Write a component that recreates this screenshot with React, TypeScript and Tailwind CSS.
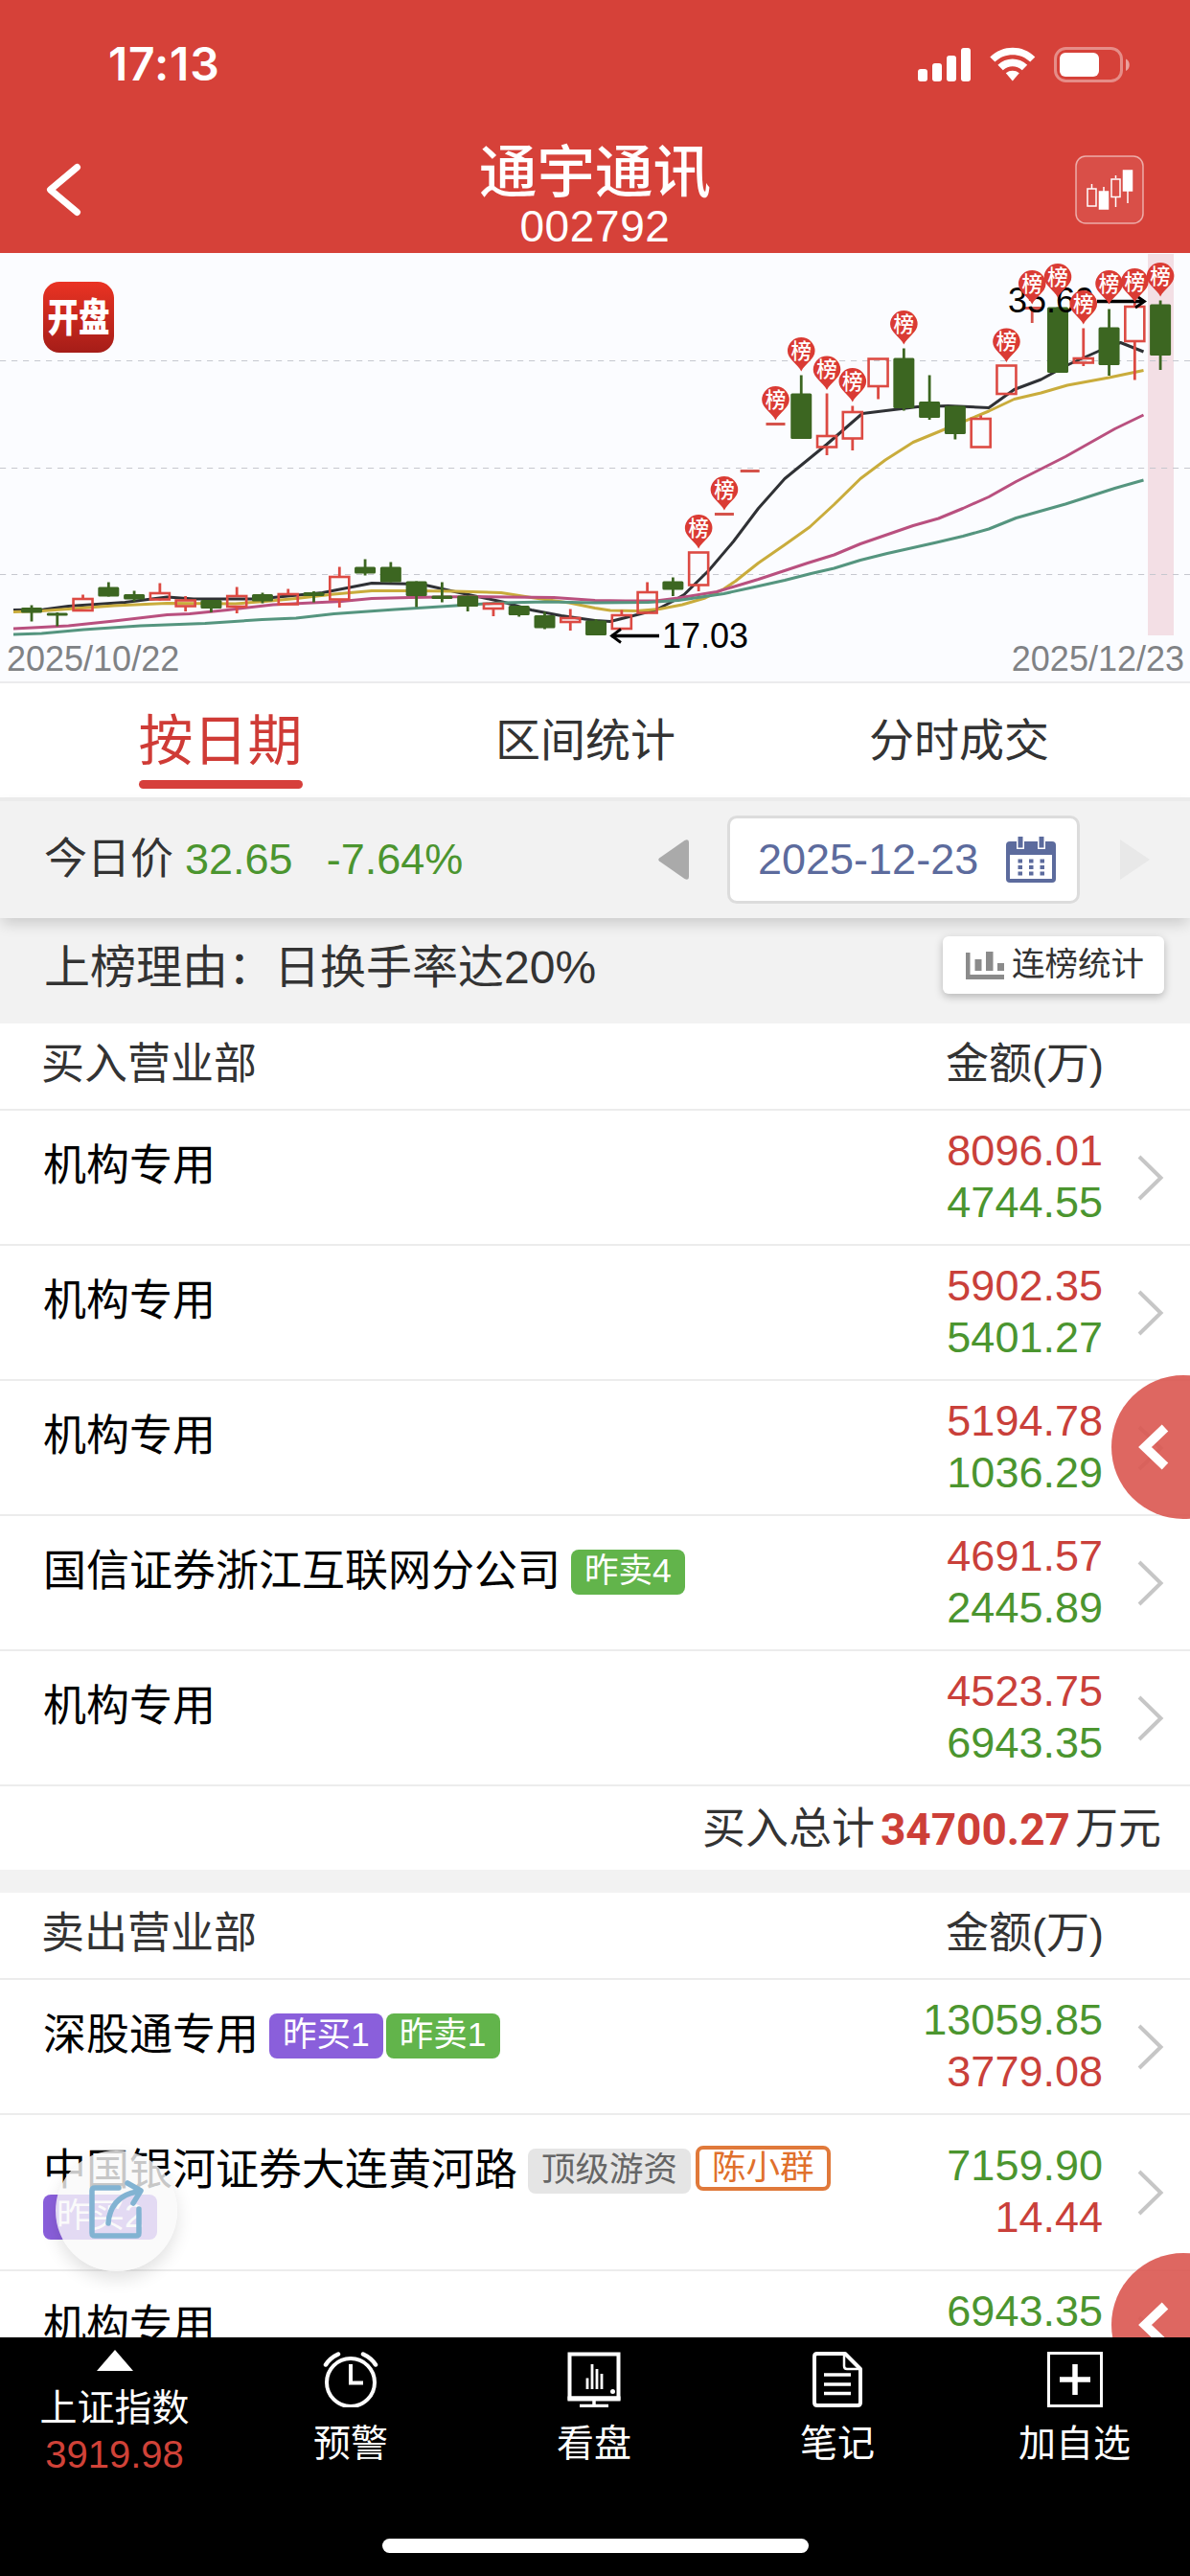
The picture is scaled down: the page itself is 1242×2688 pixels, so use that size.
import clsx from 'clsx'

type Candle = {
  up: boolean
  top: number
  bottom: number
  high: number
  low: number
  pin?: number
}

const STEP = 26.775
const FIRST_X = 33

const c = (up: boolean, top: number, bottom: number, high = top, low = bottom, pin?: number): Candle => ({ up, top, bottom, high, low, pin })

const candles: Candle[] = [
  c(false, 370, 375.5, 367.5, 384.5),
  c(false, 375.5, 378.5, 375, 389.5),
  c(true, 360.5, 372.5, 356.5),
  c(false, 348.5, 358.5, 343.5),
  c(false, 356, 361.5, 352.5, 363.5),
  c(true, 354.5, 361, 344.5, 362.5),
  c(true, 362, 368, 358, 374),
  c(false, 362, 371, 362, 375),
  c(true, 357.5, 368.5, 348.5, 376),
  c(false, 356, 363.5, 354.5, 365.5),
  c(true, 355.5, 366, 350.5),
  c(false, 354, 358, 353, 364.5),
  c(true, 337.5, 361, 327.5, 370),
  c(false, 327.5, 334.5, 319.5, 336.5),
  c(false, 327.5, 343.5, 322.5),
  c(false, 342.5, 358, 342.5, 369.5),
  c(false, 357.5, 361, 343.5, 364.5),
  c(false, 357.5, 369, 357.5, 374),
  c(true, 365.5, 370.5, 365.5, 379),
  c(false, 368, 378, 368, 379.5),
  c(false, 378, 391.5, 374.5, 392.5),
  c(true, 380.5, 384.5, 371.5, 394),
  c(false, 383.5, 399, 382),
  c(true, 377.5, 391.5, 372.5),
  c(true, 353.5, 375, 343.5),
  c(false, 342.5, 351.5, 338.5, 358),
  c(true, 312, 346, 312, 353, 273),
  c(true, 272.5, 272.5, 272.5, 272.5, 233),
  c(true, 227.5, 227.5),
  c(true, 178.5, 178.5, 178.5, 178.5, 139),
  c(false, 146.5, 194, 127.5, 194, 88),
  c(true, 190.5, 202, 146.5, 211, 107.5),
  c(true, 165.5, 193, 159.5, 206, 120),
  c(true, 110, 138.5, 110, 152.5),
  c(false, 109.5, 162, 99.5, 164.5, 60),
  c(false, 155, 172, 127.5, 174),
  c(false, 159.5, 189, 159.5, 194.5),
  c(true, 172.5, 202, 169.5),
  c(true, 117, 146.5, 117, 146.5, 78.5),
  c(true, 57.5, 57.5, 57.5, 73, 18),
  c(false, 56.5, 125, 56.5, 125, 11),
  c(true, 109.5, 114, 78.5, 118, 39),
  c(false, 77.5, 117, 58.5, 128, 18),
  c(true, 55.5, 91.5, 50, 132.5, 16),
  c(false, 53.5, 107, 49.5, 122, 10),
]

const averages = [
  {
    color: '#2f3135',
    points: '14,372.5 45.5,372 71.5,368.5 130.5,364.5 174.5,359 202,361 269,361 336.5,354.5 388,344.5 439.5,345.5 475,353.5 526.5,364.5 554.5,372.5 586,378.5 621,383.5 637,384.5 684.5,372.5 702,363.5 714,356.5 740,331 765.5,301 791.5,266.5 819,235.5 862.5,200 900,167.5 957.5,160.5 989.5,159.5 1032,161.5 1058.5,142.5 1086.5,132 1116,116 1147.5,102 1169.5,93.5 1193.5,103',
  },
  {
    color: '#c9ac3c',
    points: '14,374.5 43.5,373.5 119,368 174.5,365.5 245.5,366 277,363.5 309,360.5 348.5,356 388,352.5 431.5,352.5 475,353 523,354.5 554.5,359.5 594,365 621,370.5 637,373 664.5,373.5 688.5,371.5 712,367 736,360 755.5,350.5 767.5,342.5 791.5,323.5 819,304.5 845,286 870.5,262.5 898,235.5 924,216 953,197.5 989.5,182.5 1032,165 1058.5,152.5 1086.5,146 1114,138 1157.5,130 1193.5,122.5',
  },
  {
    color: '#b9507f',
    points: '14,392 43.5,390.5 71.5,389 119,384 174.5,377.5 198,376.5 237.5,372.5 285,367 356.5,363.5 388,360.5 427.5,359.5 491,358.5 578,359.5 621,362.5 652.5,363 684.5,363 708,360 748,353.5 791.5,340.5 843,323.5 870.5,315 898,303.5 953,284.5 979.5,277 1005,266.5 1032,254.5 1060.5,238.5 1112,212.5 1163.5,183.5 1193.5,169',
  },
  {
    color: '#55957f',
    points: '14,398 43.5,397 87,393 146.5,389 214,386.5 273.5,382.5 309,381 348.5,376.5 412,372 467.5,368.5 523,365 570.5,364 621,365 676.5,364.5 708,362.5 755.5,355.5 787.5,348.5 819,341.5 846.5,334.5 870.5,329 898,320.5 926,313.5 977.5,302 1005,295.5 1032,288 1060.5,276.5 1112,262 1163.5,245.5 1193.5,237',
  },
]

type Tag = { text: string; kind: 'buy' | 'sell' | 'type' | 'player' }
type Row = { name: string; amounts: [string, string]; tags?: Tag[] }

const buyRows: Row[] = [
  { name: '机构专用', amounts: ['8096.01', '4744.55'] },
  { name: '机构专用', amounts: ['5902.35', '5401.27'] },
  { name: '机构专用', amounts: ['5194.78', '1036.29'] },
  { name: '国信证券浙江互联网分公司', amounts: ['4691.57', '2445.89'], tags: [{ text: '昨卖4', kind: 'sell' }] },
  { name: '机构专用', amounts: ['4523.75', '6943.35'] },
]

const sellRows: Row[] = [
  {
    name: '深股通专用',
    amounts: ['13059.85', '3779.08'],
    tags: [
      { text: '昨买1', kind: 'buy' },
      { text: '昨卖1', kind: 'sell' },
    ],
  },
  {
    name: '中国银河证券大连黄河路',
    amounts: ['7159.90', '14.44'],
    tags: [
      { text: '顶级游资', kind: 'type' },
      { text: '陈小群', kind: 'player' },
      { text: '昨买2', kind: 'buy' },
    ],
  },
  { name: '机构专用', amounts: ['6943.35', '4523.75'] },
]

function StatusBar() {
  return (
    <div className="flex h-[136px] items-center justify-between pl-[113px] pr-[62px]">
      <span className="pb-0.5 font-['Inter'] text-[48px] font-semibold leading-none tracking-[0.8px]">17:13</span>
      <svg width="222" height="38" viewBox="0 0 222 38" fill="#fff">
        <rect x="0" y="23" width="10" height="13" rx="3" />
        <rect x="15" y="17" width="10" height="19" rx="3" />
        <rect x="30" y="9" width="10" height="27" rx="3" />
        <rect x="45" y="1" width="10" height="35" rx="3" />
        <path d="M75.3 10.4C88.5-2.6 109.5-2.6 122.3 10.4L117.2 15.6C107.2 5.8 90.5 5.8 80.4 15.6Z" />
        <path d="M83.4 18.8C92.2 10.4 105.2 10.4 114.2 18.8L108.8 24.2C103 18.9 94.6 18.9 88.8 24.2Z" />
        <path d="M91.8 27.2C96 23.9 101.6 23.9 105.8 27.2L98.8 35.6Z" />
        <rect x="143.5" y="1.5" width="69" height="34" rx="11" fill="none" stroke="#fff" strokeOpacity=".4" strokeWidth="3" />
        <rect x="148" y="6" width="41" height="25" rx="6" />
        <path d="M217 12.5C222 14.5 222 23 217 25Z" fillOpacity=".5" />
      </svg>
    </div>
  )
}

function Header() {
  return (
    <header className="h-[264px] shrink-0 bg-[#d64139] text-white">
      <StatusBar />
      <div className="flex h-[128px]">
        <button className="flex w-[120px] items-start pl-[46px] pt-[33px]">
          <svg width="40" height="58" viewBox="0 0 40 58" fill="none" stroke="#fff" strokeWidth="7" strokeLinecap="round" strokeLinejoin="round">
            <path d="M34.500 5.500L6.500 29L34.500 52.500" />
          </svg>
        </button>
        <div className="flex-1 pt-3 text-center">
          <h1 className="text-[60.5px] font-medium leading-[64px]">通宇通讯</h1>
          <p className="text-[46px] leading-[48px] tracking-[0.6px]">002792</p>
        </div>
        <div className="flex w-[120px] items-start pt-[26px]">
          <svg width="72" height="72" viewBox="0 0 72 72" fill="none" stroke="#fff" strokeWidth="1.5">
            <rect x="1" y="1" width="70" height="70" rx="10" fill="#fff" fillOpacity=".08" strokeOpacity=".55" />
            <path d="M17.5 30V35M30 33V38M42.5 21V24M42.5 44V54M55 37V50" />
            <rect x="13" y="35" width="9" height="18" />
            <rect x="25.5" y="38" width="9" height="18" fill="#fff" />
            <rect x="38" y="25" width="9" height="18.5" />
            <rect x="50.5" y="16" width="9" height="21" fill="#fff" />
          </svg>
        </div>
      </div>
    </header>
  )
}

function CandleShape({ candle, x }: { candle: Candle; x: number }) {
  const { up, top, bottom, high, low } = candle
  if (top === bottom) {
    return (
      <g stroke="#d5534b">
        <path d={`M${x - 10} ${top}H${x + 10}`} strokeWidth="3" />
        {low > bottom && <path d={`M${x} ${top}V${low}`} strokeWidth="2.8" />}
      </g>
    )
  }
  if (!up) {
    return (
      <g>
        <path d={`M${x} ${high}V${low}`} stroke="#3c6621" strokeWidth="2.8" />
        <rect x={x - 11} y={top} width="22" height={bottom - top} rx="1.5" fill="#3c6621" />
      </g>
    )
  }
  return (
    <g stroke="#dc4a43" fill="none">
      <path d={`M${x} ${high}V${top}M${x} ${bottom}V${low}`} strokeWidth="2.8" />
      <rect x={x - 10} y={top + 0.5} width="20" height={bottom - top} strokeWidth="2.6" />
    </g>
  )
}

function Chart() {
  return (
    <svg className="block shrink-0 bg-[#fbfcff]" width="1242" height="447" viewBox="0 0 1242 447">
      <defs>
        <linearGradient id="logo" x1="0" y1="0" x2="0" y2="1">
          <stop offset="0" stopColor="#ea3323" />
          <stop offset="1" stopColor="#a51d18" />
        </linearGradient>
      </defs>
      <rect x="1198" y="1" width="27" height="398" fill="#f3dfe5" />
      <path d="M0 112.5H1242M0 224.5H1242M0 335.5H1242" stroke="#c6c8cf" strokeWidth="1" strokeDasharray="6.2 5.8" />

      {/* 开盘 logo */}
      <rect x="45" y="30" width="74" height="74" rx="17" fill="url(#logo)" />
      <text x="49.5" y="82" fontSize="41" fontWeight="900" fill="#fff" textLength="65" lengthAdjust="spacingAndGlyphs">开盘</text>

      {averages.map((line) => (
        <polyline key={line.color} points={line.points} fill="none" stroke={line.color} strokeWidth="3" strokeLinejoin="round" />
      ))}
      {candles.map((candle, i) => (
        <CandleShape key={i} candle={candle} x={FIRST_X + i * STEP} />
      ))}

      {/* high / low labels */}
      <g stroke="#000" fill="none">
        <path d="M638 399.5H688" strokeWidth="3.5" />
        <path d="M648 392.5L638.5 399.5L648 406.5" strokeWidth="2.8" />
        <path d="M1145 50.5H1194" strokeWidth="3.5" />
        <path d="M1185 44L1194.5 50.5L1185 57" strokeWidth="2.8" />
      </g>
      <text x="691" y="412" fontSize="36" fill="#000">17.03</text>
      <text x="1052" y="61.5" fontSize="36" fill="#000">35.69</text>

      {candles.map((candle, i) => {
        if (candle.pin === undefined) return null
        return (
          <g key={i} transform={`translate(${FIRST_X + i * STEP} ${candle.pin})`}>
            <path d="M0 35.5C-4 27.5-14.3 22.5-14.3 14.3A14.3 14.3 0 0 1 14.3 14.3C14.3 22.5 4 27.5 0 35.5Z" fill="#da3b34" />
            <text y="21.5" fontSize="21.5" fontWeight="500" fill="#fff" textAnchor="middle">榜</text>
          </g>
        )
      })}

      <text x="7" y="435.5" fontSize="36" fill="#808285">2025/10/22</text>
      <text x="1236" y="435.5" fontSize="36" fill="#808285" textAnchor="end">2025/12/23</text>
    </svg>
  )
}

function Tabs() {
  return (
    <nav className="flex h-[121px] shrink-0 border-t-2 border-[#ebebed] bg-white pl-[37px] text-[47px] text-[#333]">
      <div className="flex w-[386px] flex-col items-center pt-[30px]">
        <span className="text-[57px] leading-[60px] text-[#cf3b36]">按日期</span>
        <span className="mt-[11px] h-[9px] w-[171px] rounded-full bg-[#d63f3b]" />
      </div>
      <div className="w-[376px] pt-[30px] text-center leading-[60px]">区间统计</div>
      <div className="w-[404px] pt-[30px] text-center leading-[60px]">分时成交</div>
    </nav>
  )
}

function DateBar() {
  return (
    <div className="relative flex h-[126px] shrink-0 items-center border-t-4 border-[#ebebeb] bg-[#f2f2f2] pl-[46px] pr-[41px] text-[45px] shadow-[0_8px_14px_-2px_rgba(0,0,0,0.16)]">
      <span className="text-[#333]">今日价</span>
      <span className="ml-3 text-[#4b952f]">32.65</span>
      <span className="ml-[35px] text-[#4b952f]">-7.64%</span>
      <div className="ml-auto flex items-center">
        <svg width="32" height="42" viewBox="0 0 32 42" fill="#aaa">
          <path d="M1 19.5L27.5 1Q32-1 32 3V39Q32 43 27.5 41L1 22.5Q-0.5 21 1 19.5Z" />
        </svg>
        <div className="ml-[40px] flex h-[92px] w-[368px] items-center rounded-[10px] border-[3px] border-[#dcdcdc] bg-white pl-[29px] text-[#5c6b9d]">
          <span>2025-12-23</span>
          <svg className="ml-[29px]" width="52" height="48" viewBox="0 0 52 48" fill="#5c6b9d">
            <rect x="0" y="5" width="52" height="43" rx="4" />
            <rect x="4" y="19" width="44" height="25" fill="#fff" />
            <path d="M11 0H19V13H11ZM33 0H41V13H33Z" fill="#fff" />
            <path d="M12.5 0H17.5V11.5H12.5ZM34.5 0H39.5V11.5H34.5Z" />
            <path d="M12.5 23.5h4.5v4h-4.5zM24 23.5h4.5v4h-4.5zM35.5 23.5h4.5v4h-4.5zM12.5 30h4.5v4h-4.5zM24 30h4.5v4h-4.5zM35.5 30h4.5v4h-4.5zM12.5 36.5h4.5v4h-4.5zM24 36.5h4.5v4h-4.5zM35.5 36.5h4.5v4h-4.5z" />
          </svg>
        </div>
        <svg className="ml-[42px]" width="32" height="42" viewBox="0 0 32 42" fill="#e8e8e8">
          <path d="M31 21L0 0V42Z" />
        </svg>
      </div>
    </div>
  )
}

function ReasonBar() {
  return (
    <div className="flex h-[110px] shrink-0 items-start justify-between bg-[#f2f2f2] pl-[46px] pr-[27px]">
      <p className="pt-[22px] text-[48px] leading-[60px] text-[#333]">上榜理由：日换手率达20%</p>
      <button className="relative mt-[19px] flex h-[60px] w-[231px] items-center rounded-md bg-white pl-6 text-[34.5px] text-[#333] shadow-[0_3px_8px_rgba(0,0,0,0.25)]">
        <svg className="mr-2" width="40" height="30" viewBox="0 0 40 30" fill="#8b8b8b">
          <path d="M0 2H4.5V25H40V30H0ZM9.5 9H16.5V21H9.5ZM21 1H28.5V21H21ZM33 13H40V21H33Z" />
        </svg>
        <span className="pb-0.5 leading-[48px]">连榜统计</span>
      </button>
    </div>
  )
}

function TableHead({ title }: { title: string }) {
  return (
    <div className="flex h-[91px] shrink-0 items-center justify-between border-b-2 border-[#ececec] pb-[3px] pl-[43px] pr-[90px] text-[45px] text-[#333]">
      <span>{title}</span>
      <span>金额(万)</span>
    </div>
  )
}

function TagBadge({ tag }: { tag: Tag }) {
  return (
    <span
      className={clsx(
        'flex h-[47px] items-center rounded-lg text-[35.5px] leading-none',
        tag.kind === 'buy' && 'bg-[#8a5fdb] px-[14px] pb-[2px] text-white',
        tag.kind === 'sell' && 'bg-[#62b44b] px-[14px] pb-[2px] text-white',
        tag.kind === 'type' && 'bg-[#e5e5e5] px-[14px] pb-[2px] text-[#666]',
        tag.kind === 'player' && '-mt-[3px] mb-[3px] ml-0.5 border-4 border-[#e0793a] bg-white px-[13px] text-[#e0702c]',
      )}
    >
      {tag.text}
    </span>
  )
}

function BrokerRow({ row, side }: { row: Row; side: 'buy' | 'sell' }) {
  return (
    <div className="flex min-h-[141px] shrink-0 items-center border-b-2 border-[#ececec] pr-[27px] text-[45px]">
      <div className="flex w-[900px] flex-wrap gap-x-[3px] gap-y-px self-start pb-[31px] pl-[45px] pt-[35px]">
        <span className="mr-2 h-[47px] leading-[45px] text-black">{row.name}</span>
        {row.tags?.map((tag, i) => (
          <TagBadge key={i} tag={tag} />
        ))}
      </div>
      <div className="ml-auto flex flex-col pb-0.5 text-right leading-[54px]">
        <span className={side === 'buy' ? 'text-[#c9403a]' : 'text-[#4b952f]'}>{row.amounts[0]}</span>
        <span className={side === 'buy' ? 'text-[#4b952f]' : 'text-[#c9403a]'}>{row.amounts[1]}</span>
      </div>
      <svg className="ml-[36px]" width="28" height="48" viewBox="0 0 28 48" fill="none" stroke="#c6c6c6" strokeWidth="4">
        <path d="M2 2L24.5 24L2 46" />
      </svg>
    </div>
  )
}

function SideHandle({ className }: { className: string }) {
  return (
    <button className={clsx('absolute -right-[68px] h-[150px] w-[150px] rounded-full bg-[#da5650]/90 pl-[28px]', className)}>
      <svg width="32" height="48" viewBox="0 0 32 48" fill="none" stroke="#fff" strokeWidth="9.5">
        <path d="M28 4L7 24L28 44" />
      </svg>
    </button>
  )
}

function ShareButton() {
  return (
    <button className="absolute left-[58px] top-[2244px] flex h-[126px] w-[127px] items-center justify-center rounded-full bg-[#f9f9f9]/80 shadow-[0_8px_18px_rgba(0,0,0,0.12)]">
      <svg width="58" height="64" viewBox="0 0 58 64" fill="none" stroke="#82b3d2" strokeWidth="5.5" strokeLinecap="round" strokeLinejoin="round">
        <path d="M31 8H6Q3 8 3 11V55Q3 58 6 58H49Q52 58 52 55V30" />
        <path d="M20 45C21 29 30 15 50 12" />
        <path d="M40 3L54 11L46 24" />
      </svg>
    </button>
  )
}

function FooterItem({ label, className, children }: { label: string; className: string; children: React.ReactNode }) {
  return (
    <div className={clsx('flex flex-col items-center pt-[15px]', className)}>
      <svg width="58" height="58" viewBox="0 0 58 58" fill="none" stroke="#fff" strokeWidth="4">
        {children}
      </svg>
      <span className="mt-[14px] leading-[48px]">{label}</span>
    </div>
  )
}

function Footer() {
  return (
    <footer className="relative h-[249px] shrink-0 bg-black text-[39px] text-white">
      <div className="flex h-[210px]">
        <div className="flex w-[239px] flex-col items-center pt-[13px]">
          <svg width="38" height="22" viewBox="0 0 38 22" fill="#fff">
            <path d="M19 0L38 22H0Z" />
          </svg>
          <span className="mt-[15px] leading-[48px]">上证指数</span>
          <span className="text-[40px] leading-[48px] text-[#d04238]">3919.98</span>
        </div>
        <FooterItem label="预警" className="w-[254px]">
          <circle cx="29" cy="32" r="25" />
          <path d="M29 13V32.5H42" />
          <path d="M3 13.5Q7.5 6.5 16 2.5M55 13.5Q50.5 6.5 42 2.5" strokeWidth="4.5" strokeLinecap="round" />
        </FooterItem>
        <FooterItem label="看盘" className="w-[254px]">
          <path d="M3.5 2.5H54.5V48.5H3.5Z" />
          <path d="M1.5 49H56.5" strokeWidth="5" />
          <path d="M29 50V57M14 56.5H44" strokeWidth="3.5" />
          <path d="M22 27.5V39M27 13V39M32 18V39M37 23V39" strokeWidth="2.8" />
          <circle cx="48.5" cy="41.5" r="2.5" fill="#fff" stroke="none" />
        </FooterItem>
        <FooterItem label="笔记" className="w-[254px]">
          <path d="M8 2H37L53 18V53Q53 56 50 56H8Q5 56 5 53V5Q5 2 8 2Z" strokeLinejoin="round" />
          <path d="M36 3V15Q36 18 39 18H52" strokeWidth="2.5" />
          <path d="M15 24H43M15 34H43M15 43.5H43" strokeWidth="3.5" />
        </FooterItem>
        <FooterItem label="加自选" className="w-[241px]">
          <path d="M1.5 1.5H56.5V56.5H1.5Z" strokeWidth="3" />
          <path d="M13 29H45M29 13V45" strokeWidth="5.5" />
        </FooterItem>
      </div>
      <div className="mx-auto h-[15px] w-[445px] rounded-full bg-white" />
    </footer>
  )
}

export default function App() {
  return (
    <div className="relative flex h-[2688px] w-[1242px] flex-col overflow-hidden bg-white font-['Liberation_Sans','Noto_Sans_CJK_SC',sans-serif]">
      <Header />
      <main className="flex min-h-0 flex-1 flex-col overflow-hidden">
        <Chart />
        <Tabs />
        <DateBar />
        <ReasonBar />

        {/* Buy side */}
        <TableHead title="买入营业部" />
        {buyRows.map((row, i) => (
          <BrokerRow key={i} row={row} side="buy" />
        ))}
        <div className="flex h-[87px] shrink-0 items-center justify-end pr-[30px] pt-[3px] text-[45px] text-[#333]">
          买入总计
          <span className="ml-[6px] mr-[5px] font-['Roboto'] text-[46px] font-bold text-[#cd3f38]">34700.27</span>
          万元
        </div>
        <div className="h-6 shrink-0 bg-[#f2f2f2]" />

        {/* Sell side */}
        <TableHead title="卖出营业部" />
        {sellRows.map((row, i) => (
          <BrokerRow key={i} row={row} side="sell" />
        ))}
      </main>

      <SideHandle className="top-[1435px]" />
      <SideHandle className="top-[2351px]" />
      <ShareButton />
      <Footer />
    </div>
  )
}
